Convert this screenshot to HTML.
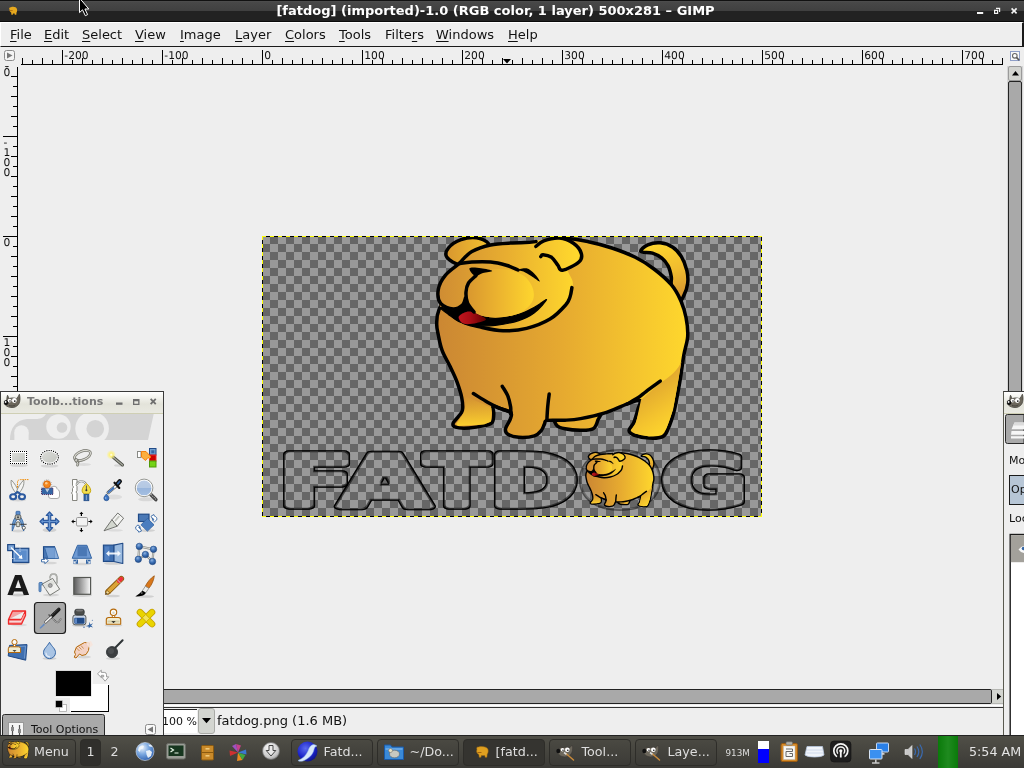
<!DOCTYPE html>
<html lang="en">
<head>
<meta charset="utf-8">
<title>[fatdog] (imported)-1.0 (RGB color, 1 layer) 500x281 – GIMP</title>
<style>
*{box-sizing:border-box;margin:0;padding:0}
html,body{width:1024px;height:768px;overflow:hidden;background:#eeeeee;font-family:"DejaVu Sans","Liberation Sans",sans-serif;font-size:13px;color:#111}
.abs{position:absolute}
#titlebar{position:absolute;left:0;top:0;width:1024px;height:22px;background:linear-gradient(#111 0,#111 1px,#505050 1px,#484848 2px,#404040 10.5px,#222 11px,#222 21px,#0a0a0a 21px,#0a0a0a 22px)}
#titlebar .t{position:absolute;left:0;top:3px;width:991px;text-align:center;color:#fff;font-weight:bold;font-size:13px;line-height:16px;white-space:nowrap}
#menubar{position:absolute;left:0;top:22px;width:1024px;height:25px;background:#eeeeee;border-top:1px solid #fff;border-left:1px solid #fff;border-bottom:1px solid #1a1a1a;border-right:2px solid #1a1a1a}
#menubar span{position:absolute;top:4px;font-size:13px;line-height:16px;white-space:nowrap}
#menubar u{text-decoration:underline;text-underline-offset:2px}
#taskbar{position:absolute;left:0;top:735px;width:1024px;height:33px;background:linear-gradient(#504f47,#3b3a36);border-top:1px solid #222}
#taskbar .lbl{position:absolute;color:#dedede;font-size:12.7px;line-height:16px;top:8px;white-space:nowrap}
.tbtn{position:absolute;top:3px;height:27px;border:1px solid #2e2d29;border-radius:4px;background:linear-gradient(#4a4942,#3c3b37)}
</style>
</head>
<body>
<div id="root" style="position:absolute;left:0;top:0;width:1024px;height:768px;will-change:transform">
<!-- main window title -->
<div id="titlebar">
  <div class="t">[fatdog] (imported)-1.0 (RGB color, 1 layer) 500x281 – GIMP</div>
  <svg class="abs" style="left:0;top:0" width="1024" height="22" viewBox="0 0 1024 22">
    <path d="M9.500 9.500c-0.800-1.200 0-2.600 1.500-2.300 2-0.700 5.500-0.400 6 2 0.300 1.500 0 2.500-0.500 3.300l-0.200 2.300h-1.500l-0.200-1.400h-1.600l-0.200 1.400h-1.400l-0.200-2.200c-1.200-0.600-1.800-1.700-1.700-3.100z" fill="#e6a81e"/><path d="M9.300 10.600h3.400" stroke="#9a5a08" stroke-width="0.700"/>
    <g fill="#f4f4f4"><rect x="977" y="12" width="6.200" height="2"/><path d="M996 7.800h4.200v4.300h-1.200v-3.100h-3zM994 9.800h4.200v4.200h-4.200zM995.200 11v1.800h1.800v-1.800z" fill-rule="evenodd"/><path d="M1011 9l1.200-1.200 1.900 1.900 1.900-1.900 1.200 1.200-1.900 1.900 1.900 1.900-1.200 1.200-1.900-1.900-1.900 1.900-1.200-1.200 1.900-1.900z"/></g>
    <path d="M79.500 -2V12.600l3-2.800 2.800 5.900 2.300-1.100-2.700-5.600h3.900z" fill="#000" stroke="#fff" stroke-width="1" stroke-linejoin="round"/>
  </svg>
</div>
<div id="menubar">
  <span style="left:9px"><u>F</u>ile</span>
  <span style="left:43px"><u>E</u>dit</span>
  <span style="left:81px"><u>S</u>elect</span>
  <span style="left:134px"><u>V</u>iew</span>
  <span style="left:179px"><u>I</u>mage</span>
  <span style="left:234px"><u>L</u>ayer</span>
  <span style="left:284px"><u>C</u>olors</span>
  <span style="left:338px"><u>T</u>ools</span>
  <span style="left:384px">Filte<u>r</u>s</span>
  <span style="left:435px"><u>W</u>indows</span>
  <span style="left:507px"><u>H</u>elp</span>
</div>
<svg class="abs" style="left:0;top:0" width="1024" height="400" viewBox="0 0 1024 400" shape-rendering="crispEdges">
<g stroke="#000" stroke-width="1" fill="none"><path d="M21 64.5H1003"/><path d="M22.5 58V64M32.5 60V64M42.5 58V64M52.5 60V64M62.5 50V64M72.5 60V64M82.5 58V64M92.5 60V64M102.5 58V64M112.5 60V64M122.5 58V64M132.5 60V64M142.5 58V64M152.5 60V64M162.5 50V64M172.5 60V64M182.5 58V64M192.5 60V64M202.5 58V64M212.5 60V64M222.5 58V64M232.5 60V64M242.5 58V64M252.5 60V64M262.5 50V64M272.5 60V64M282.5 58V64M292.5 60V64M302.5 58V64M312.5 60V64M322.5 58V64M332.5 60V64M342.5 58V64M352.5 60V64M362.5 50V64M372.5 60V64M382.5 58V64M392.5 60V64M402.5 58V64M412.5 60V64M422.5 58V64M432.5 60V64M442.5 58V64M452.5 60V64M462.5 50V64M472.5 60V64M482.5 58V64M492.5 60V64M502.5 58V64M512.5 60V64M522.5 58V64M532.5 60V64M542.5 58V64M552.5 60V64M562.5 50V64M572.5 60V64M582.5 58V64M592.5 60V64M602.5 58V64M612.5 60V64M622.5 58V64M632.5 60V64M642.5 58V64M652.5 60V64M662.5 50V64M672.5 60V64M682.5 58V64M692.5 60V64M702.5 58V64M712.5 60V64M722.5 58V64M732.5 60V64M742.5 58V64M752.5 60V64M762.5 50V64M772.5 60V64M782.5 58V64M792.5 60V64M802.5 58V64M812.5 60V64M822.5 58V64M832.5 60V64M842.5 58V64M852.5 60V64M862.5 50V64M872.5 60V64M882.5 58V64M892.5 60V64M902.5 58V64M912.5 60V64M922.5 58V64M932.5 60V64M942.5 58V64M952.5 60V64M962.5 50V64M972.5 60V64M982.5 58V64M992.5 60V64M1002.5 58V64"/><path d="M17.5 67V392"/><path d="M11 76.5H17M13 86.5H17M11 96.5H17M13 106.5H17M11 116.5H17M13 126.5H17M3 136.5H17M13 146.5H17M11 156.5H17M13 166.5H17M11 176.5H17M13 186.5H17M11 196.5H17M13 206.5H17M11 216.5H17M13 226.5H17M3 236.5H17M13 246.5H17M11 256.5H17M13 266.5H17M11 276.5H17M13 286.5H17M11 296.5H17M13 306.5H17M11 316.5H17M13 326.5H17M3 336.5H17M13 346.5H17M11 356.5H17M13 366.5H17M11 376.5H17M13 386.5H17"/></g>
<path d="M503 59h8l-4 4.6z" fill="#000" shape-rendering="auto"/>
<g font-family="DejaVu Sans, sans-serif" font-size="10.7" fill="#111" shape-rendering="auto" text-rendering="geometricPrecision">
<g><text x="64.3" y="58.6">-200</text><text x="164.3" y="58.6">-100</text><text x="264.3" y="58.6">0</text><text x="364.3" y="58.6">100</text><text x="464.3" y="58.6">200</text><text x="564.3" y="58.6">300</text><text x="664.3" y="58.6">400</text><text x="764.3" y="58.6">500</text><text x="864.3" y="58.6">600</text><text x="964.3" y="58.6">700</text></g>
<g clip-path="url(#vclip)"><text x="3.5" y="76.4">0</text><text x="3.5" y="66.6">0</text><text x="3.5" y="146.2">-</text><text x="3.5" y="156.2">1</text><text x="3.5" y="166.2">0</text><text x="3.5" y="176.2">0</text><text x="3.5" y="246.2">0</text><text x="3.5" y="346.2">1</text><text x="3.5" y="356.2">0</text><text x="3.5" y="366.2">0</text></g>
</g>
<defs><clipPath id="vclip"><rect x="0" y="66" width="18" height="330"/></clipPath></defs>
<rect x="4.5" y="50.5" width="10" height="10" rx="2" fill="#f4f4f4" stroke="#8a8a8a" shape-rendering="auto"/>
<path d="M7 52.5l5.5 3-5.5 3z" fill="#777" shape-rendering="auto"/>
</svg>
<svg class="abs" style="left:262px;top:236px" width="500" height="281" viewBox="0 0 500 281">
<defs>
<pattern id="chk" width="16" height="16" patternUnits="userSpaceOnUse"><rect width="16" height="16" fill="#666666"/><rect width="8" height="8" fill="#999999"/><rect x="8" y="8" width="8" height="8" fill="#999999"/></pattern>
<linearGradient id="gold" gradientUnits="userSpaceOnUse" x1="175" y1="0" x2="427" y2="0"><stop offset="0" stop-color="#cb8733"/><stop offset="0.5" stop-color="#e6aa30"/><stop offset="1" stop-color="#ffd82d"/></linearGradient>
<linearGradient id="ghead" gradientUnits="userSpaceOnUse" x1="176" y1="0" x2="314" y2="0"><stop offset="0" stop-color="#cf8c33"/><stop offset="0.5" stop-color="#e8ae30"/><stop offset="1" stop-color="#ffd82d"/></linearGradient>
<linearGradient id="gmuz" gradientUnits="userSpaceOnUse" x1="204" y1="0" x2="270" y2="0"><stop offset="0" stop-color="#d8962f"/><stop offset="0.5" stop-color="#ecb42f"/><stop offset="1" stop-color="#fdd42e"/></linearGradient>
<linearGradient id="gear" gradientUnits="userSpaceOnUse" x1="184" y1="0" x2="228" y2="0"><stop offset="0" stop-color="#d8962f"/><stop offset="1" stop-color="#f3c22f"/></linearGradient>
<linearGradient id="gtail" gradientUnits="userSpaceOnUse" x1="400" y1="8" x2="416" y2="62"><stop offset="0" stop-color="#fdd42e"/><stop offset="0.5" stop-color="#f0bc2f"/><stop offset="1" stop-color="#d4932f"/></linearGradient>
<linearGradient id="gleg" gradientUnits="userSpaceOnUse" x1="0" y1="160" x2="0" y2="190"><stop offset="0" stop-color="#f4c52e" stop-opacity="0"/><stop offset="1" stop-color="#fbd02e"/></linearGradient>
<linearGradient id="gleg2" gradientUnits="userSpaceOnUse" x1="378" y1="150" x2="410" y2="195"><stop offset="0" stop-color="#dda22f"/><stop offset="0.6" stop-color="#f4c42e"/><stop offset="1" stop-color="#ffd82d"/></linearGradient>
<linearGradient id="gtong" gradientUnits="userSpaceOnUse" x1="196" y1="0" x2="224" y2="0"><stop offset="0" stop-color="#c2161f"/><stop offset="0.45" stop-color="#a80d15"/><stop offset="1" stop-color="#5e0000"/></linearGradient>
</defs>
<rect x="0" y="0" width="500" height="281" fill="url(#chk)" shape-rendering="crispEdges"/>
<g font-family="DejaVu Sans, Liberation Sans, sans-serif" font-weight="bold" font-size="70.8" stroke-linejoin="round" stroke="#000" stroke-width="7.4" fill="#000">
<filter id="ring" filterUnits="userSpaceOnUse" x="0" y="200" width="500" height="81"><feMorphology in="SourceAlpha" operator="erode" radius="1" result="e1"/><feMorphology in="SourceAlpha" operator="erode" radius="2" result="e2"/><feComposite in="SourceAlpha" in2="e1" operator="out" result="r1"/><feComposite in="SourceAlpha" in2="e2" operator="out" result="r2"/><feComponentTransfer in="r2" result="r2h"><feFuncA type="linear" slope="0.55"/></feComponentTransfer><feMerge><feMergeNode in="r2h"/><feMergeNode in="r1"/></feMerge></filter>
<g filter="url(#ring)"><text transform="translate(16.67 270.3) scale(1.547 1)">F</text></g>
<g filter="url(#ring)"><text transform="translate(77.18 270.3) scale(1.665 1)">A</text></g>
<g filter="url(#ring)"><text transform="translate(162.49 270.3) scale(1.337 1)">T</text></g>
<g filter="url(#ring)"><text transform="translate(227.80 270.3) scale(1.501 1)">D</text></g>
<g filter="url(#ring)" opacity="0.5"><text transform="translate(317.24 270.3) scale(1.355 1)">O</text></g>
<g filter="url(#ring)"><text transform="translate(399.26 270.3) scale(1.480 1)">G</text></g>
</g>
<g id="dog">
<path d="M378.8 15.4C378.0 14.0 382.6 10.2 385.8 8.8C389.1 7.4 394.1 6.4 398.3 6.8C402.5 7.2 407.3 8.9 410.8 11.2C414.3 13.5 417.0 16.7 419.4 20.6C421.8 24.5 423.8 30.2 424.9 34.6C425.9 39.0 426.2 42.9 425.7 47.1C425.2 51.3 423.4 56.5 421.8 59.6C420.2 62.8 418.1 67.6 416.0 66.0C413.9 64.4 410.6 54.2 409.5 50.0C408.4 45.8 409.9 44.2 409.3 40.9C408.7 37.5 407.7 33.0 406.1 29.9C404.5 26.8 402.5 24.2 399.9 22.1C397.3 20.0 394.0 18.2 390.5 17.1C387.0 16.0 379.6 16.8 378.8 15.4Z" fill="url(#gtail)" stroke="#000" stroke-width="3.5" stroke-linejoin="round" stroke-linecap="round"/>
<path d="M296.0 180.0C289.1 182.1 293.1 186.7 294.3 188.8C295.5 190.9 298.9 191.9 303.0 192.8C307.1 193.7 313.9 194.3 318.6 194.3C323.3 194.3 328.2 194.5 331.1 192.8C334.0 191.1 335.0 187.0 335.8 184.2C336.6 181.4 342.6 176.7 336.0 176.0C329.4 175.3 302.9 177.9 296.0 180.0Z" fill="url(#gold)" stroke="#000" stroke-width="3.5" stroke-linejoin="round" stroke-linecap="round"/>
<path d="M303.0 2.6C309.1 2.1 318.6 4.1 326.4 5.7C334.2 7.3 342.1 9.4 349.9 12.0C357.7 14.6 366.3 17.8 373.3 21.3C380.3 24.8 386.0 28.4 392.0 33.0C398.0 37.6 404.9 43.5 409.3 48.7C413.7 53.9 416.2 58.8 418.6 64.3C421.1 69.8 422.8 75.5 424.0 81.5C425.2 87.5 426.1 94.0 425.7 100.3C425.3 106.6 423.1 111.7 421.8 119.3C420.5 126.9 419.4 136.8 417.8 145.9C416.2 155.0 414.3 166.2 412.4 174.0C410.4 181.8 408.1 188.4 406.1 192.8C404.2 197.2 403.8 199.1 400.7 200.6C397.6 202.1 392.2 202.4 387.4 202.1C382.6 201.8 375.2 200.3 371.8 199.0C368.4 197.7 367.0 196.4 367.0 194.3C367.0 192.2 370.3 190.1 371.8 186.5C373.3 182.9 375.0 176.7 376.0 173.0C377.0 169.3 379.8 165.4 378.0 164.5C376.2 163.6 371.5 165.7 365.5 167.8C359.5 169.9 349.8 174.6 342.0 177.1C334.2 179.6 325.1 181.4 318.6 182.6C312.1 183.8 308.6 183.9 303.0 184.2C297.4 184.5 288.6 183.8 285.2 184.4C281.8 185.0 283.5 186.3 282.5 188.0C281.5 189.7 281.1 192.3 279.4 194.3C277.7 196.3 276.2 198.6 272.4 199.8C268.6 201.0 261.2 201.6 256.8 201.3C252.4 201.0 248.0 199.6 245.8 198.2C243.6 196.8 243.1 195.3 243.5 192.8C243.9 190.3 247.3 186.1 248.2 183.4C249.1 180.7 250.5 178.4 248.8 176.6C247.1 174.8 241.0 173.4 238.0 172.4C235.0 171.4 232.0 169.6 231.0 170.4C230.0 171.2 231.9 174.4 231.8 177.1C231.7 179.8 231.8 184.4 230.2 186.5C228.6 188.6 226.3 188.7 222.4 189.6C218.5 190.5 211.6 191.7 206.8 192.0C202.0 192.3 196.1 192.0 193.5 191.2C190.9 190.4 190.6 189.1 191.1 187.3C191.6 185.5 195.0 182.5 196.6 180.3C198.2 178.1 200.0 177.1 200.5 174.0C201.0 170.9 200.6 166.2 199.7 161.5C198.8 156.8 196.9 151.1 195.0 145.9C193.1 140.7 190.5 135.5 188.0 130.3C185.5 125.1 182.1 119.8 180.2 114.6C178.2 109.4 177.2 103.5 176.3 99.0C175.4 94.5 174.6 92.0 174.7 87.8C174.8 83.6 174.4 80.0 177.0 73.7C179.6 67.4 183.7 58.0 190.0 50.0C196.3 42.0 204.2 31.8 215.0 26.0C225.8 20.2 242.5 17.8 255.0 15.0C267.5 12.2 282.0 11.1 290.0 9.0C298.0 6.9 296.9 3.1 303.0 2.6Z" fill="url(#gold)" stroke="#000" stroke-width="3.5" stroke-linejoin="round" stroke-linecap="round"/>
<path d="M203 160C204 170 203 176 199 181L194 188L196 190L222 188.5L229 185.5L230 172Z" fill="url(#gleg)"/>
<path d="M397 148L379 164L374 187L369.5 194L373 197.5L387 200.5L399.5 199L404.500 192L411 174L416 146L419.500 125C417 133 408 141 397 148Z" fill="url(#gleg2)"/>
<path d="M211.4 157.6C213.8 159.0 221.1 163.7 225.5 166.2C229.9 168.7 234.1 170.7 238.0 172.4C241.9 174.1 247.1 175.7 248.9 176.3" fill="none" stroke="#000" stroke-width="3.5" stroke-linejoin="round" stroke-linecap="round"/>
<path d="M240.3 150.3C241.2 151.9 244.4 156.5 245.8 159.9C247.2 163.3 248.1 167.9 248.6 170.9C249.1 173.9 248.6 176.8 248.6 178.0" fill="none" stroke="#000" stroke-width="3.5" stroke-linejoin="round" stroke-linecap="round"/>
<path d="M287.2 158.1C286.9 160.2 286.1 166.6 285.7 170.9C285.3 175.2 285.0 182.0 284.9 184.2" fill="none" stroke="#000" stroke-width="3.5" stroke-linejoin="round" stroke-linecap="round"/>
<path d="M398.3 145.1C396.0 146.8 388.0 152.5 384.3 155.3C380.6 158.1 379.1 159.7 376.0 161.8C372.9 163.9 367.2 166.8 365.5 167.8" fill="none" stroke="#000" stroke-width="3.5" stroke-linejoin="round" stroke-linecap="round"/>
<path d="M198.0 28.5C193.8 28.4 186.8 24.1 184.9 21.3C183.0 18.6 184.1 14.9 186.4 12.0C188.8 9.1 194.3 5.4 199.0 3.7C203.7 2.0 210.0 1.2 214.6 1.8C219.2 2.4 225.1 5.3 226.3 7.3C227.5 9.3 224.7 11.6 222.0 14.0C219.3 16.4 214.0 19.6 210.0 22.0C206.0 24.4 202.2 28.6 198.0 28.5Z" fill="url(#gear)" stroke="#000" stroke-width="3.5" stroke-linejoin="round" stroke-linecap="round"/>
<path d="M196.6 26.5C201.0 22.5 204.6 18.1 209.9 15.1C215.2 12.2 221.8 10.2 228.6 8.8C235.4 7.4 244.8 7.2 250.5 6.8C256.2 6.4 258.6 6.9 263.0 6.5C267.4 6.1 271.3 4.9 277.0 4.2C282.7 3.5 291.7 1.6 297.4 2.1C303.1 2.6 307.8 4.8 311.4 7.3C315.0 9.8 318.4 14.3 319.3 17.4C320.2 20.5 319.1 23.4 316.9 26.0C314.7 28.6 307.1 29.8 306.0 33.0C304.9 36.2 309.9 41.7 310.5 45.0C311.1 48.3 311.0 48.6 309.9 52.6C308.8 56.6 307.2 63.9 303.6 69.0C300.0 74.1 294.5 79.2 288.0 83.1C281.5 87.0 272.4 90.5 264.6 92.4C256.8 94.4 248.9 95.0 241.1 94.8C233.3 94.5 224.2 92.3 217.7 90.9C211.2 89.5 207.2 88.3 202.0 86.2C196.8 84.1 190.3 80.8 186.4 78.4C182.5 76.0 180.3 76.2 178.6 72.0C176.9 67.8 175.5 58.9 176.3 53.4C177.1 47.9 179.9 43.8 183.3 39.3C186.7 34.8 192.2 30.5 196.6 26.5Z" fill="url(#ghead)"/>
<path d="M197.5 27.0C199.6 25.1 204.7 18.6 209.9 15.6C215.1 12.6 221.8 10.4 228.6 9.0C235.4 7.5 244.8 7.3 250.5 6.9C256.2 6.5 259.1 6.8 263.0 6.6C266.9 6.4 272.2 5.8 274.0 5.6" fill="none" stroke="#000" stroke-width="3.5" stroke-linejoin="round" stroke-linecap="round"/>
<path d="M273.9 10.4C275.2 9.5 277.9 6.3 281.8 4.9C285.7 3.5 292.5 1.7 297.4 2.1C302.3 2.5 307.8 4.8 311.4 7.3C315.0 9.8 318.4 14.3 319.3 17.4C320.2 20.5 320.0 23.2 316.9 26.0C313.8 28.8 304.0 33.8 300.5 34.3C297.0 34.8 297.6 31.4 295.8 29.2C294.0 27.0 292.1 23.1 289.6 21.3C287.1 19.6 282.8 18.8 281.0 18.7C279.2 18.6 279.2 20.3 278.8 20.6" fill="none" stroke="#000" stroke-width="3.5" stroke-linejoin="round" stroke-linecap="round"/>
<path d="M197.5 27.4C195.1 29.4 186.8 35.0 183.3 39.3C179.8 43.6 177.1 48.7 176.3 53.4C175.5 58.1 176.1 64.2 178.6 67.4C181.1 70.7 187.4 72.6 191.1 72.9C194.8 73.2 198.4 70.8 200.5 69.0C202.6 67.2 203.0 63.2 203.5 62.0" fill="url(#ghead)" stroke="#000" stroke-width="3.5" stroke-linejoin="round" stroke-linecap="round"/>
<path d="M197.5 27.6C199.6 27.3 204.7 26.3 209.9 26.0C215.1 25.7 222.9 25.5 228.6 26.0C234.3 26.5 239.7 27.9 244.3 29.2C248.9 30.5 254.1 33.2 256.0 34.0" fill="none" stroke="#000" stroke-width="3.5" stroke-linejoin="round" stroke-linecap="round"/>
<path d="M309.9 51.6C309.6 53.2 309.1 58.1 308.0 61.0C306.9 63.9 306.9 65.3 303.6 69.0C300.3 72.7 294.5 79.2 288.0 83.1C281.5 87.0 272.4 90.5 264.6 92.4C256.8 94.4 248.9 95.0 241.1 94.8C233.3 94.5 224.2 92.3 217.7 90.9C211.2 89.5 204.6 87.3 202.0 86.6" fill="none" stroke="#000" stroke-width="3.5" stroke-linejoin="round" stroke-linecap="round"/>
<path d="M203.5 66.5C205.8 67.8 209.6 75.8 214.6 78.4C219.6 81.0 226.3 82.3 233.3 82.3C240.3 82.3 250.3 80.2 256.8 78.4C263.3 76.6 267.8 73.8 272.4 71.3C277.0 68.8 284.6 62.7 284.6 63.6C284.6 64.5 277.0 73.3 272.4 76.8C267.8 80.3 263.3 82.5 256.8 84.6C250.3 86.7 241.1 88.5 233.3 89.3C225.5 90.1 216.0 89.9 209.9 89.3C203.8 88.7 200.5 87.2 196.6 85.4C192.7 83.6 189.5 80.7 186.4 78.4C183.3 76.1 177.4 72.1 178.2 71.4C179.0 70.7 187.4 74.3 191.1 74.2C194.8 74.1 198.5 71.9 200.6 70.6C202.7 69.3 201.2 65.2 203.5 66.5Z" fill="#000" stroke="#000" stroke-width="1.2" stroke-linejoin="round"/>
<path d="M196.6 81.5C196.6 79.7 199.8 77.7 202.0 76.8C204.2 75.9 206.2 75.0 209.9 76.0C213.6 77.0 223.1 81.3 223.9 83.1C224.7 84.9 218.2 86.2 214.6 87.0C210.9 87.8 205.0 88.7 202.0 87.8C199.0 86.9 196.6 83.3 196.6 81.5Z" fill="url(#gtong)"/>
<path d="M213.0 40.0C216.4 36.8 219.7 35.1 225.0 34.0C230.3 32.9 238.8 32.5 245.0 33.5C251.2 34.5 257.7 36.8 262.0 40.0C266.3 43.2 269.7 48.7 271.0 53.0C272.3 57.3 272.4 61.9 270.0 66.0C267.6 70.1 262.9 74.9 256.8 77.5C250.7 80.1 240.3 81.5 233.3 81.5C226.3 81.5 219.3 80.1 214.6 77.5C209.9 74.9 206.7 70.0 205.0 66.0C203.3 62.0 203.1 57.7 204.4 53.4C205.7 49.1 209.6 43.2 213.0 40.0Z" fill="url(#gmuz)"/>
<path d="M214.0 39.5C212.8 40.8 208.2 44.2 206.5 47.0C204.8 49.8 204.2 52.7 204.0 56.0C203.8 59.3 204.2 63.7 205.5 67.0C206.8 70.3 210.9 74.5 212.0 76.0" fill="none" stroke="#000" stroke-width="3.5" stroke-linejoin="round" stroke-linecap="round"/>
<path d="M207.5 32.3C208.5 31.0 215.2 31.8 219.0 32.2C222.8 32.6 229.9 34.1 230.2 34.9C230.5 35.7 223.9 36.2 221.0 37.0C218.1 37.8 215.2 40.7 213.0 39.9C210.8 39.1 206.5 33.6 207.5 32.3Z" fill="#000"/>
<path d="M255.2 33.8C255.7 33.2 261.7 31.6 264.6 32.3C267.5 33.0 270.2 35.6 272.4 37.8C274.6 40.0 278.3 45.2 277.8 45.6C277.3 46.0 271.9 41.8 269.2 40.1C266.5 38.4 263.7 36.7 261.4 35.6C259.1 34.5 254.7 34.3 255.2 33.8Z" fill="#000"/>
</g>
<g transform="translate(276.500 216) scale(0.271)"><g id="dogs">
<path d="M378.8 15.4C378.0 14.0 382.6 10.2 385.8 8.8C389.1 7.4 394.1 6.4 398.3 6.8C402.5 7.2 407.3 8.9 410.8 11.2C414.3 13.5 417.0 16.7 419.4 20.6C421.8 24.5 423.8 30.2 424.9 34.6C425.9 39.0 426.2 42.9 425.7 47.1C425.2 51.3 423.4 56.5 421.8 59.6C420.2 62.8 418.1 67.6 416.0 66.0C413.9 64.4 410.6 54.2 409.5 50.0C408.4 45.8 409.9 44.2 409.3 40.9C408.7 37.5 407.7 33.0 406.1 29.9C404.5 26.8 402.5 24.2 399.9 22.1C397.3 20.0 394.0 18.2 390.5 17.1C387.0 16.0 379.6 16.8 378.8 15.4Z" fill="url(#gtail)" stroke="#000" stroke-width="5.2" stroke-linejoin="round" stroke-linecap="round"/>
<path d="M296.0 180.0C289.1 182.1 293.1 186.7 294.3 188.8C295.5 190.9 298.9 191.9 303.0 192.8C307.1 193.7 313.9 194.3 318.6 194.3C323.3 194.3 328.2 194.5 331.1 192.8C334.0 191.1 335.0 187.0 335.8 184.2C336.6 181.4 342.6 176.7 336.0 176.0C329.4 175.3 302.9 177.9 296.0 180.0Z" fill="url(#gold)" stroke="#000" stroke-width="5.2" stroke-linejoin="round" stroke-linecap="round"/>
<path d="M303.0 2.6C309.1 2.1 318.6 4.1 326.4 5.7C334.2 7.3 342.1 9.4 349.9 12.0C357.7 14.6 366.3 17.8 373.3 21.3C380.3 24.8 386.0 28.4 392.0 33.0C398.0 37.6 404.9 43.5 409.3 48.7C413.7 53.9 416.2 58.8 418.6 64.3C421.1 69.8 422.8 75.5 424.0 81.5C425.2 87.5 426.1 94.0 425.7 100.3C425.3 106.6 423.1 111.7 421.8 119.3C420.5 126.9 419.4 136.8 417.8 145.9C416.2 155.0 414.3 166.2 412.4 174.0C410.4 181.8 408.1 188.4 406.1 192.8C404.2 197.2 403.8 199.1 400.7 200.6C397.6 202.1 392.2 202.4 387.4 202.1C382.6 201.8 375.2 200.3 371.8 199.0C368.4 197.7 367.0 196.4 367.0 194.3C367.0 192.2 370.3 190.1 371.8 186.5C373.3 182.9 375.0 176.7 376.0 173.0C377.0 169.3 379.8 165.4 378.0 164.5C376.2 163.6 371.5 165.7 365.5 167.8C359.5 169.9 349.8 174.6 342.0 177.1C334.2 179.6 325.1 181.4 318.6 182.6C312.1 183.8 308.6 183.9 303.0 184.2C297.4 184.5 288.6 183.8 285.2 184.4C281.8 185.0 283.5 186.3 282.5 188.0C281.5 189.7 281.1 192.3 279.4 194.3C277.7 196.3 276.2 198.6 272.4 199.8C268.6 201.0 261.2 201.6 256.8 201.3C252.4 201.0 248.0 199.6 245.8 198.2C243.6 196.8 243.1 195.3 243.5 192.8C243.9 190.3 247.3 186.1 248.2 183.4C249.1 180.7 250.5 178.4 248.8 176.6C247.1 174.8 241.0 173.4 238.0 172.4C235.0 171.4 232.0 169.6 231.0 170.4C230.0 171.2 231.9 174.4 231.8 177.1C231.7 179.8 231.8 184.4 230.2 186.5C228.6 188.6 226.3 188.7 222.4 189.6C218.5 190.5 211.6 191.7 206.8 192.0C202.0 192.3 196.1 192.0 193.5 191.2C190.9 190.4 190.6 189.1 191.1 187.3C191.6 185.5 195.0 182.5 196.6 180.3C198.2 178.1 200.0 177.1 200.5 174.0C201.0 170.9 200.6 166.2 199.7 161.5C198.8 156.8 196.9 151.1 195.0 145.9C193.1 140.7 190.5 135.5 188.0 130.3C185.5 125.1 182.1 119.8 180.2 114.6C178.2 109.4 177.2 103.5 176.3 99.0C175.4 94.5 174.6 92.0 174.7 87.8C174.8 83.6 174.4 80.0 177.0 73.7C179.6 67.4 183.7 58.0 190.0 50.0C196.3 42.0 204.2 31.8 215.0 26.0C225.8 20.2 242.5 17.8 255.0 15.0C267.5 12.2 282.0 11.1 290.0 9.0C298.0 6.9 296.9 3.1 303.0 2.6Z" fill="url(#gold)" stroke="#000" stroke-width="5.2" stroke-linejoin="round" stroke-linecap="round"/>
<path d="M203 160C204 170 203 176 199 181L194 188L196 190L222 188.5L229 185.5L230 172Z" fill="url(#gleg)"/>
<path d="M397 148L379 164L374 187L369.5 194L373 197.5L387 200.5L399.5 199L404.500 192L411 174L416 146L419.500 125C417 133 408 141 397 148Z" fill="url(#gleg2)"/>
<path d="M211.4 157.6C213.8 159.0 221.1 163.7 225.5 166.2C229.9 168.7 234.1 170.7 238.0 172.4C241.9 174.1 247.1 175.7 248.9 176.3" fill="none" stroke="#000" stroke-width="5.2" stroke-linejoin="round" stroke-linecap="round"/>
<path d="M240.3 150.3C241.2 151.9 244.4 156.5 245.8 159.9C247.2 163.3 248.1 167.9 248.6 170.9C249.1 173.9 248.6 176.8 248.6 178.0" fill="none" stroke="#000" stroke-width="5.2" stroke-linejoin="round" stroke-linecap="round"/>
<path d="M287.2 158.1C286.9 160.2 286.1 166.6 285.7 170.9C285.3 175.2 285.0 182.0 284.9 184.2" fill="none" stroke="#000" stroke-width="5.2" stroke-linejoin="round" stroke-linecap="round"/>
<path d="M398.3 145.1C396.0 146.8 388.0 152.5 384.3 155.3C380.6 158.1 379.1 159.7 376.0 161.8C372.9 163.9 367.2 166.8 365.5 167.8" fill="none" stroke="#000" stroke-width="5.2" stroke-linejoin="round" stroke-linecap="round"/>
<path d="M198.0 28.5C193.8 28.4 186.8 24.1 184.9 21.3C183.0 18.6 184.1 14.9 186.4 12.0C188.8 9.1 194.3 5.4 199.0 3.7C203.7 2.0 210.0 1.2 214.6 1.8C219.2 2.4 225.1 5.3 226.3 7.3C227.5 9.3 224.7 11.6 222.0 14.0C219.3 16.4 214.0 19.6 210.0 22.0C206.0 24.4 202.2 28.6 198.0 28.5Z" fill="url(#gear)" stroke="#000" stroke-width="5.2" stroke-linejoin="round" stroke-linecap="round"/>
<path d="M196.6 26.5C201.0 22.5 204.6 18.1 209.9 15.1C215.2 12.2 221.8 10.2 228.6 8.8C235.4 7.4 244.8 7.2 250.5 6.8C256.2 6.4 258.6 6.9 263.0 6.5C267.4 6.1 271.3 4.9 277.0 4.2C282.7 3.5 291.7 1.6 297.4 2.1C303.1 2.6 307.8 4.8 311.4 7.3C315.0 9.8 318.4 14.3 319.3 17.4C320.2 20.5 319.1 23.4 316.9 26.0C314.7 28.6 307.1 29.8 306.0 33.0C304.9 36.2 309.9 41.7 310.5 45.0C311.1 48.3 311.0 48.6 309.9 52.6C308.8 56.6 307.2 63.9 303.6 69.0C300.0 74.1 294.5 79.2 288.0 83.1C281.5 87.0 272.4 90.5 264.6 92.4C256.8 94.4 248.9 95.0 241.1 94.8C233.3 94.5 224.2 92.3 217.7 90.9C211.2 89.5 207.2 88.3 202.0 86.2C196.8 84.1 190.3 80.8 186.4 78.4C182.5 76.0 180.3 76.2 178.6 72.0C176.9 67.8 175.5 58.9 176.3 53.4C177.1 47.9 179.9 43.8 183.3 39.3C186.7 34.8 192.2 30.5 196.6 26.5Z" fill="url(#ghead)"/>
<path d="M197.5 27.0C199.6 25.1 204.7 18.6 209.9 15.6C215.1 12.6 221.8 10.4 228.6 9.0C235.4 7.5 244.8 7.3 250.5 6.9C256.2 6.5 259.1 6.8 263.0 6.6C266.9 6.4 272.2 5.8 274.0 5.6" fill="none" stroke="#000" stroke-width="5.2" stroke-linejoin="round" stroke-linecap="round"/>
<path d="M273.9 10.4C275.2 9.5 277.9 6.3 281.8 4.9C285.7 3.5 292.5 1.7 297.4 2.1C302.3 2.5 307.8 4.8 311.4 7.3C315.0 9.8 318.4 14.3 319.3 17.4C320.2 20.5 320.0 23.2 316.9 26.0C313.8 28.8 304.0 33.8 300.5 34.3C297.0 34.8 297.6 31.4 295.8 29.2C294.0 27.0 292.1 23.1 289.6 21.3C287.1 19.6 282.8 18.8 281.0 18.7C279.2 18.6 279.2 20.3 278.8 20.6" fill="none" stroke="#000" stroke-width="5.2" stroke-linejoin="round" stroke-linecap="round"/>
<path d="M197.5 27.4C195.1 29.4 186.8 35.0 183.3 39.3C179.8 43.6 177.1 48.7 176.3 53.4C175.5 58.1 176.1 64.2 178.6 67.4C181.1 70.7 187.4 72.6 191.1 72.9C194.8 73.2 198.4 70.8 200.5 69.0C202.6 67.2 203.0 63.2 203.5 62.0" fill="url(#ghead)" stroke="#000" stroke-width="5.2" stroke-linejoin="round" stroke-linecap="round"/>
<path d="M197.5 27.6C199.6 27.3 204.7 26.3 209.9 26.0C215.1 25.7 222.9 25.5 228.6 26.0C234.3 26.5 239.7 27.9 244.3 29.2C248.9 30.5 254.1 33.2 256.0 34.0" fill="none" stroke="#000" stroke-width="5.2" stroke-linejoin="round" stroke-linecap="round"/>
<path d="M309.9 51.6C309.6 53.2 309.1 58.1 308.0 61.0C306.9 63.9 306.9 65.3 303.6 69.0C300.3 72.7 294.5 79.2 288.0 83.1C281.5 87.0 272.4 90.5 264.6 92.4C256.8 94.4 248.9 95.0 241.1 94.8C233.3 94.5 224.2 92.3 217.7 90.9C211.2 89.5 204.6 87.3 202.0 86.6" fill="none" stroke="#000" stroke-width="5.2" stroke-linejoin="round" stroke-linecap="round"/>
<path d="M203.5 66.5C205.8 67.8 209.6 75.8 214.6 78.4C219.6 81.0 226.3 82.3 233.3 82.3C240.3 82.3 250.3 80.2 256.8 78.4C263.3 76.6 267.8 73.8 272.4 71.3C277.0 68.8 284.6 62.7 284.6 63.6C284.6 64.5 277.0 73.3 272.4 76.8C267.8 80.3 263.3 82.5 256.8 84.6C250.3 86.7 241.1 88.5 233.3 89.3C225.5 90.1 216.0 89.9 209.9 89.3C203.8 88.7 200.5 87.2 196.6 85.4C192.7 83.6 189.5 80.7 186.4 78.4C183.3 76.1 177.4 72.1 178.2 71.4C179.0 70.7 187.4 74.3 191.1 74.2C194.8 74.1 198.5 71.9 200.6 70.6C202.7 69.3 201.2 65.2 203.5 66.5Z" fill="#000" stroke="#000" stroke-width="1.2" stroke-linejoin="round"/>
<path d="M196.6 81.5C196.6 79.7 199.8 77.7 202.0 76.8C204.2 75.9 206.2 75.0 209.9 76.0C213.6 77.0 223.1 81.3 223.9 83.1C224.7 84.9 218.2 86.2 214.6 87.0C210.9 87.8 205.0 88.7 202.0 87.8C199.0 86.9 196.6 83.3 196.6 81.5Z" fill="url(#gtong)"/>
<path d="M213.0 40.0C216.4 36.8 219.7 35.1 225.0 34.0C230.3 32.9 238.8 32.5 245.0 33.5C251.2 34.5 257.7 36.8 262.0 40.0C266.3 43.2 269.7 48.7 271.0 53.0C272.3 57.3 272.4 61.9 270.0 66.0C267.6 70.1 262.9 74.9 256.8 77.5C250.7 80.1 240.3 81.5 233.3 81.5C226.3 81.5 219.3 80.1 214.6 77.5C209.9 74.9 206.7 70.0 205.0 66.0C203.3 62.0 203.1 57.7 204.4 53.4C205.7 49.1 209.6 43.2 213.0 40.0Z" fill="url(#gmuz)"/>
<path d="M214.0 39.5C212.8 40.8 208.2 44.2 206.5 47.0C204.8 49.8 204.2 52.7 204.0 56.0C203.8 59.3 204.2 63.7 205.5 67.0C206.8 70.3 210.9 74.5 212.0 76.0" fill="none" stroke="#000" stroke-width="5.2" stroke-linejoin="round" stroke-linecap="round"/>
<path d="M207.5 32.3C208.5 31.0 215.2 31.8 219.0 32.2C222.8 32.6 229.9 34.1 230.2 34.9C230.5 35.7 223.9 36.2 221.0 37.0C218.1 37.8 215.2 40.7 213.0 39.9C210.8 39.1 206.5 33.6 207.5 32.3Z" fill="#000"/>
<path d="M255.2 33.8C255.7 33.2 261.7 31.6 264.6 32.3C267.5 33.0 270.2 35.6 272.4 37.8C274.6 40.0 278.3 45.2 277.8 45.6C277.3 46.0 271.9 41.8 269.2 40.1C266.5 38.4 263.7 36.7 261.4 35.6C259.1 34.5 254.7 34.3 255.2 33.8Z" fill="#000"/>
</g></g>
<rect x="0.5" y="0.5" width="499" height="280" fill="none" stroke="#000" stroke-width="1" shape-rendering="crispEdges"/>
<g stroke="#ffff00" stroke-width="1" stroke-dasharray="4 4" shape-rendering="crispEdges"><path d="M0 0.500H500"/><path d="M0 280.500H500"/><path d="M0.500 0V281"/><path d="M499.500 0V281" stroke-dashoffset="3"/></g>
</svg>

<!-- vertical scrollbar -->
<div class="abs" style="left:1007px;top:66px;width:16px;height:325px;background:#d6d6d6"></div>
<div class="abs" style="left:1008px;top:66px;width:14px;height:15px;background:#d3d4d0;border:1px solid #9a9a9a;border-radius:2px"></div>
<svg class="abs" style="left:1008px;top:66px" width="14" height="15"><path d="M4 9.5h7L7.500 5z" fill="#000"/></svg>
<div class="abs" style="left:1008px;top:81px;width:14px;height:311px;background:#a9a9a9;border:1px solid #222;border-radius:2px 2px 0 0"></div>
<!-- zoom corner icon -->
<svg class="abs" style="left:1008px;top:49px" width="14" height="14" viewBox="0 0 14 14"><rect x="2.500" y="2.500" width="9" height="9" fill="#f8f8f8" stroke="#2a4a9a" stroke-width="1" stroke-dasharray="1 1"/><circle cx="6.8" cy="6.800" r="2.300" fill="#fff" stroke="#666" stroke-width="1.100"/><path d="M8.600 8.600l2.600 2.600" stroke="#555" stroke-width="1.600"/></svg>
<!-- horizontal scrollbar -->
<div class="abs" style="left:164px;top:689px;width:828px;height:15px;background:#a9a9a9;border:1px solid #222;border-left:0;border-radius:0 2px 2px 0"></div>
<div class="abs" style="left:992px;top:689px;width:11px;height:15px;background:#d3d5d0;border-top:1px solid #b5b6b2;border-bottom:1px solid #b5b6b2"></div>
<svg class="abs" style="left:992px;top:689px" width="12" height="15"><path d="M5 4v7l4.200-3.500z" fill="#000"/></svg>
<div class="abs" style="left:164px;top:705px;width:840px;height:1px;background:#fff"></div>
<div class="abs" style="left:164px;top:707px;width:840px;height:1px;background:#333"></div>
<!-- status bar -->
<div class="abs" style="left:164px;top:708px;width:840px;height:27px;background:#eeeeee"></div>
<div class="abs" style="left:164px;top:709px;width:33px;height:24px;background:#fff;border-top:1px solid #222;overflow:hidden"><div class="abs" style="left:-2px;top:4px;font-size:11px;line-height:16px;white-space:nowrap">100 %</div></div>
<div class="abs" style="left:198px;top:708px;width:17px;height:26px;background:#d3d5d0;border:1px solid #a9aaa6;border-radius:3px"></div>
<svg class="abs" style="left:198px;top:708px" width="17" height="26"><path d="M4 10h9l-4.500 5.200z" fill="#000"/></svg>
<div class="abs" style="left:217px;top:713px;font-size:13px;line-height:16px;white-space:nowrap">fatdog.png (1.6 MB)</div>

<!-- toolbox window -->
<div class="abs" style="left:0;top:391px;width:164px;height:344px;background:#eeeeee;border:1px solid #3a3a3a;border-bottom:0"></div>
<div class="abs" style="left:1px;top:392px;width:162px;height:22px;background:linear-gradient(#ffffff 0,#f4f4ef 5px,#e3e3da 12px,#e9e9e1 21px);border-bottom:1px solid #cfcfb4"></div>
<div class="abs" style="left:27px;top:394px;font-size:11px;line-height:16px;font-weight:bold;color:#777;white-space:nowrap">Toolb...tions</div>
<svg class="abs" style="left:0;top:391px" width="164" height="344" viewBox="0 391 164 344">
<defs>
<linearGradient id="tbGray" x1="0" y1="0" x2="1" y2="1"><stop offset="0" stop-color="#dcddd9"/><stop offset="1" stop-color="#c2c4bf"/></linearGradient>
<radialGradient id="tbGlow"><stop offset="0" stop-color="#fff"/><stop offset="0.35" stop-color="#fff27a"/><stop offset="1" stop-color="#fff27a" stop-opacity="0"/></radialGradient>
<linearGradient id="tbBlue" x1="0" y1="0" x2="1" y2="1"><stop offset="0" stop-color="#6a93c8"/><stop offset="1" stop-color="#3465a4"/></linearGradient>
<linearGradient id="tbBlend" x1="0" y1="0" x2="1" y2="0"><stop offset="0" stop-color="#5a5a5a"/><stop offset="1" stop-color="#fafafa"/></linearGradient>
<linearGradient id="tbGlass" x1="0" y1="0" x2="0" y2="1"><stop offset="0" stop-color="#bccde6"/><stop offset="0.48" stop-color="#b4c8e3"/><stop offset="0.52" stop-color="#98b5dc"/><stop offset="1" stop-color="#a6c0e2"/></linearGradient>
<radialGradient id="tbBall" cx="0.4" cy="0.3" r="0.7"><stop offset="0" stop-color="#8fb3e0"/><stop offset="0.5" stop-color="#3f73b8"/><stop offset="1" stop-color="#204a87"/></radialGradient>
<linearGradient id="tbShadow" x1="0" y1="0" x2="0" y2="1"><stop offset="0" stop-color="#000" stop-opacity="0.22"/><stop offset="1" stop-color="#000" stop-opacity="0"/></linearGradient>
</defs>
<!-- wm buttons -->
<g fill="#6e6e6e"><rect x="116" y="402.500" width="6.500" height="2.300"/><path d="M133 399h6.500v6h-6.500zM134.300 401.300v2.400h3.900v-2.400z" fill-rule="evenodd"/><path d="M150 399.600l1.300-1.300 1.900 1.900 1.900-1.900 1.300 1.300-1.900 1.900 1.900 1.900-1.300 1.300-1.900-1.900-1.900 1.900-1.300-1.300 1.900-1.900z"/></g>
<g id="wilber"><path d="M7.500 395.200c0.800 1.500 1.200 2.600 1.800 3.400 2.400-1 5.200-0.900 7.200 0.100 1.200-1.200 2.100-2.800 2.900-4.500 0.900 3 0.900 6.400-0.300 9.200-1.500 3-5 4.600-8.500 4.100-3.200-0.500-5.300-2-6.300-3.900l2.500-4.300c0-1.500 0.300-2.900 0.700-4.100z" fill="#6c675c" stroke="#3e3c37" stroke-width="0.700" stroke-linejoin="round"/>
<path d="M9 405.300c2 1 4.500 0.900 6.500-0.500" fill="none" stroke="#3e3c37" stroke-width="0.800"/>
<ellipse cx="6.100" cy="402.500" rx="2.200" ry="2.500" transform="rotate(-25 6.100 402.500)" fill="#111"/><ellipse cx="5.600" cy="401.900" rx="0.900" ry="1.100" fill="#e8e8e8"/>
<circle cx="9.600" cy="400.600" r="1.900" fill="#fff"/><circle cx="10" cy="401.100" r="0.750" fill="#111"/>
<circle cx="14.300" cy="400.500" r="2.400" fill="#fff"/><circle cx="14.800" cy="401.100" r="0.850" fill="#111"/></g>

<!-- banner -->
<clipPath id="bclip"><rect x="2" y="414" width="160" height="26"/></clipPath>
<g clip-path="url(#bclip)">
<path d="M10 440C10 428 16 420 27 419C36 418.500 41 421 46 414H153.700L148 440Z" fill="#d4d4d4"/>
<circle cx="21.500" cy="432.300" r="7.100" fill="#eeeeee"/><rect x="14.400" y="432.300" width="14.200" height="8" fill="#eeeeee"/>
<circle cx="58.500" cy="426.500" r="12.200" fill="#eeeeee"/><circle cx="62" cy="427.500" r="5.300" fill="#d4d4d4"/>
<circle cx="92.100" cy="428.500" r="16.800" fill="#eeeeee"/><circle cx="95.300" cy="428.800" r="8.800" fill="#d4d4d4"/>
<rect x="2" y="440" width="160" height="6" fill="#eeeeee"/>
<rect x="2" y="408" width="160" height="6" fill="none"/>
</g>
<!-- row 1 -->
<g>
<ellipse cx="19" cy="465.500" rx="9" ry="1.600" fill="#000" opacity="0.100"/>
<rect x="10" y="451" width="17" height="13" fill="#fff"/>
<rect x="12" y="453" width="13" height="9" fill="url(#tbGray)"/>
<path d="M10 451.500h17M10 463.500h17" stroke="#000" stroke-width="1" stroke-dasharray="1 1" shape-rendering="crispEdges"/>
<path d="M10.500 451v13M26.500 451v13" stroke="#000" stroke-width="1" stroke-dasharray="1 1" shape-rendering="crispEdges"/>
<ellipse cx="49.500" cy="466" rx="9" ry="1.600" fill="#000" opacity="0.100"/>
<ellipse cx="49.500" cy="457.300" rx="8.800" ry="6.700" fill="url(#tbGray)" stroke="#fff" stroke-width="2.400"/>
<ellipse cx="49.500" cy="457.300" rx="8.900" ry="6.800" fill="none" stroke="#000" stroke-width="1.200" stroke-dasharray="1.100 1.150"/>
<!-- lasso -->
<ellipse cx="84" cy="464.500" rx="7" ry="1.500" fill="#000" opacity="0.080"/>
<g fill="none" stroke-linecap="round"><ellipse cx="82.500" cy="455.500" rx="8.500" ry="4.300" transform="rotate(-22 82.500 455.500)" stroke="#77776f" stroke-width="2.600"/><ellipse cx="82.500" cy="455.500" rx="8.500" ry="4.300" transform="rotate(-22 82.500 455.500)" stroke="#d9d9d2" stroke-width="1.100"/>
<path d="M75.500 459.500q0.500 2.500 2.500 3.500l-0.500 2.200" stroke="#77776f" stroke-width="2.600"/><path d="M75.500 459.500q0.500 2.500 2.500 3.500l-0.500 2.200" stroke="#d9d9d2" stroke-width="1"/><circle cx="76.300" cy="460.200" r="1.700" fill="#c9c9c2" stroke="#77776f" stroke-width="0.900"/></g>
<!-- wand -->
<ellipse cx="119" cy="465.500" rx="5" ry="1.200" fill="#000" opacity="0.100"/>
<path d="M113 457l9.500 8" stroke="#4a4c44" stroke-width="3" stroke-linecap="round"/><path d="M113 457l9.500 8" stroke="#a4a69c" stroke-width="1.400" stroke-linecap="round"/>
<circle cx="111.200" cy="454.800" r="4.800" fill="url(#tbGlow)"/>
<!-- color select -->
<rect x="149.500" y="448.500" width="6.500" height="6.500" fill="#729fcf" stroke="#204a87"/><rect x="151.300" y="450.300" width="3" height="3" fill="#3465a4"/>
<rect x="149.500" y="455" width="6.500" height="6" fill="#cc0000" stroke="#ef2929"/>
<rect x="149.500" y="461" width="6.500" height="6" fill="#73d216" stroke="#4e9a06"/>
<rect x="137.500" y="451.500" width="3.500" height="6" fill="#fff" stroke="#888a85"/>
<path d="M141.500 451.500h4.500l5 5.500-1.500 1.500-1.500-1-2.500 3-4-3.500z" fill="#fcaf3e" stroke="#f57900" stroke-width="0.900"/>
</g>
<!-- row 2 -->
<g>
<!-- scissors -->
<ellipse cx="18" cy="500" rx="8" ry="1.500" fill="#000" opacity="0.100"/>
<path d="M11.300 480c-1 4.500 1.200 9.500 5.200 13.500l2.200-1.500c-1.500-4.500-4-8.500-7.400-12z" fill="#f4f4f2" stroke="#888a85" stroke-width="0.900" stroke-linejoin="round"/>
<path d="M23.700 480c1 4.500-1.200 9.500-5.200 13.500l-2.200-1.500c1.500-4.500 4-8.500 7.400-12z" fill="#f4f4f2" stroke="#888a85" stroke-width="0.900" stroke-linejoin="round"/>
<ellipse cx="13.200" cy="496.700" rx="3" ry="2.500" fill="none" stroke="#2c5aa0" stroke-width="2.100"/><ellipse cx="22" cy="496.700" rx="3" ry="2.500" fill="none" stroke="#2c5aa0" stroke-width="2.100"/>
<path d="M14.300 494.300l3.300-2.300 3.300 2.300" fill="none" stroke="#2c5aa0" stroke-width="2"/>
<path d="M17.500 487.500v-5q0-2.900 3-2.900h8.500" fill="none" stroke="#f08a00" stroke-width="1" stroke-dasharray="1.500 0.800"/>
<!-- fg select -->
<rect x="48.500" y="489.500" width="11" height="9" rx="2.500" fill="#fff" stroke="#aaa"/><circle cx="54" cy="489.500" r="3.300" fill="#fff" stroke="#aaa"/><rect x="50" y="489.500" width="8" height="4" fill="#fff"/>
<rect x="41.500" y="488" width="11.500" height="6.500" fill="#3465a4" stroke="#5c3566" stroke-width="1" stroke-dasharray="1 1"/>
<path d="M45 488.500l2.300 4 2.300-4" fill="#fff" opacity="0.700"/>
<circle cx="47" cy="484.300" r="3.500" fill="#f5871f" stroke="#ce5c00" stroke-width="0.800"/><circle cx="46.300" cy="483.300" r="1.300" fill="#fcc98a"/>
<circle cx="47" cy="484.300" r="4.600" fill="none" stroke="#888" stroke-width="0.700" stroke-dasharray="0.800 1.200"/>
<!-- paths -->
<path d="M72.500 479.500h4.500v4l-1 1.500 1 1.500v4l-1 1.500 1 1.500v7h-4.500v-6l-1-1.500 1-1.500v-3l1-1.500-1-1.500z" fill="#fff" stroke="#77776f" stroke-width="0.900"/>
<path d="M76.500 484.500c2-4 7-4.500 9.500-0.500" fill="none" stroke="#888a85" stroke-width="2.200"/><path d="M76.500 484.500c2-4 7-4.500 9.500-0.500" fill="none" stroke="#fff" stroke-width="0.900"/>
<path d="M86.400 483.500c2 1.500 4.300 4.500 4.300 7 0 2-1.800 3.500-2.300 3.500h-4c-0.500 0-2.300-1.500-2.300-3.500 0-2.500 2.300-5.500 4.300-7z" fill="#f2de4c" stroke="#c4a000" stroke-width="0.900"/>
<path d="M86.400 485.500v5" stroke="#555" stroke-width="1"/><circle cx="86.400" cy="490.300" r="1" fill="#333"/>
<rect x="84" y="494.300" width="4.800" height="6.400" fill="#3465a4" stroke="#204a87" stroke-width="0.800"/><path d="M86.400 495v5" stroke="#9bb8de" stroke-width="0.800"/>
<!-- color picker -->
<ellipse cx="114" cy="497" rx="8" ry="2.500" fill="#000" opacity="0.070"/>
<path d="M116.500 485.500l-8.300 7" stroke="#555753" stroke-width="3.400" stroke-linecap="round"/><path d="M116.300 485.700l-8 6.800" stroke="#fff" stroke-width="1.800" stroke-linecap="round"/><path d="M113.500 488l-5 4.300" stroke="#3b74c4" stroke-width="1.800" stroke-linecap="round"/>
<path d="M114.500 482.700l4.800 5.200" stroke="#111" stroke-width="2.200" stroke-linecap="round"/>
<path d="M117.500 484l2.300-2.700" stroke="#111" stroke-width="4.400" stroke-linecap="round"/><path d="M117.800 483.600l1.800-2.100" stroke="#3465a4" stroke-width="1.800" stroke-linecap="round"/>
<path d="M106.400 494c1.500 1.800 2.500 2.800 2.500 4.200a2.500 2.500 0 0 1-5 0c0-1.400 1-2.400 2.500-4.200z" fill="#3b74c4" stroke="#204a87" stroke-width="0.700"/><circle cx="105.700" cy="498" r="0.800" fill="#a8c4e8"/>
<!-- zoom -->
<ellipse cx="146" cy="499.300" rx="8" ry="2" fill="#000" opacity="0.090"/>
<path d="M150.300 494l5.500 5.600" stroke="#444" stroke-width="3.600" stroke-linecap="round"/><path d="M151 494.500l5 5" stroke="#bbb" stroke-width="1.200" stroke-dasharray="1 1"/>
<circle cx="144.100" cy="487.900" r="8.300" fill="url(#tbGlass)" stroke="#fff" stroke-width="1.800"/><circle cx="144.100" cy="487.900" r="8.800" fill="none" stroke="#888a85" stroke-width="0.900"/>
</g>

<!-- row 3 -->
<g>
<!-- measure -->
<ellipse cx="18" cy="531" rx="7" ry="1.500" fill="#000" opacity="0.100"/>
<path d="M16.300 516.500c-3.500 3-4.500 8.500-4 14.500l1.800-4.500c0.500-3.500 1.500-6 4-8z" fill="#729fcf" stroke="#3465a4" stroke-width="0.900" stroke-linejoin="round"/>
<path d="M19.700 516.500c3.500 3 4.500 8.500 4 14.500l-1.800-4.500c-0.500-3.500-1.500-6-4-8z" fill="#729fcf" stroke="#3465a4" stroke-width="0.900" stroke-linejoin="round"/>
<path d="M9.800 524.300h16.800" stroke="#333" stroke-width="0.900"/>
<rect x="16" y="511.300" width="4" height="4" rx="0.800" fill="#5b8ccb" stroke="#3465a4" stroke-width="0.800"/>
<rect x="15.200" y="515" width="5.600" height="4.400" rx="1.200" fill="#babdb6" stroke="#555753" stroke-width="0.900"/><circle cx="18" cy="517.200" r="1" fill="#444"/>
<rect x="16.200" y="522" width="3.600" height="4.600" rx="1" fill="#d3d7cf" stroke="#555753" stroke-width="0.900"/>
<circle cx="23.800" cy="527.800" r="1.600" fill="#fff" stroke="#555753" stroke-width="0.900"/>
<!-- move -->
<ellipse cx="49.500" cy="530" rx="7" ry="2" fill="#000" opacity="0.120"/>
<path d="M49.500 512L52.700 515.400H50.700V520.300H55.600V518.300L59 521.500L55.600 524.700V522.700H50.700V527.600H52.700L49.500 531L46.300 527.600H48.300V522.700H43.400V524.700L40 521.500L43.400 518.300V520.300H48.300V515.400H46.300Z" fill="#6a97d2" stroke="#2c5aa0" stroke-width="1.200" stroke-linejoin="round"/>
<!-- align -->
<rect x="76.500" y="517.500" width="11" height="8.500" rx="1.200" fill="#f2f2f2" stroke="#999" stroke-width="1"/>
<g fill="#000"><path d="M81.400 511.800l2 2.300h-1.400v1.900h-1.200v-1.900h-1.400z"/><path d="M81.400 532.300l2-2.300h-1.400v-1.900h-1.200v1.900h-1.400z"/><path d="M71.300 521.500l2.300-2v1.400h1.900v1.200h-1.900v1.400z"/><path d="M92.600 521.500l-2.300-2v1.400h-1.900v1.200h1.900v1.400z"/></g>
<!-- crop -->
<ellipse cx="115" cy="530.300" rx="8" ry="1.300" fill="#000" opacity="0.080"/>
<path d="M104 530.800l8-11.200 5.200 6.600z" fill="#d3d7cf" stroke="#555753" stroke-width="0.800" stroke-linejoin="round"/>
<path d="M112 519.800l5.800-6.800 5.800 5.200-6.400 8z" fill="#f4f4f2" stroke="#555753" stroke-width="0.800" stroke-linejoin="round"/>
<path d="M115.500 520.500l3.300-3.800" stroke="#c4c6c0" stroke-width="1.800" stroke-linecap="round"/>
<!-- rotate -->
<ellipse cx="147" cy="530.500" rx="8" ry="1.500" fill="#000" opacity="0.120"/>
<rect x="138.500" y="514.200" width="10.500" height="7.300" fill="#4a78b5" stroke="#204a87" stroke-width="1.200"/>
<path d="M147.400 518.400l6.600 6.400-6.600 6.300-6.400-6.300z" fill="#4a7dbf" stroke="#3465a4" stroke-width="0.900"/>
<path d="M151 516.300l2.800-1.800 0.500 1.500c2 0.500 2.800 2 2.500 3.800l-2.300 2-2.300-2h1.500c0-1-0.500-1.500-1.300-1.500l0.500 1.200z" fill="#fff" stroke="#3465a4" stroke-width="0.900" stroke-linejoin="round"/>
<path d="M141.500 531l-2.800 1.200-0.500-1.500c-2-0.500-2.800-2-2.500-3.800l2.300-2 2.300 2h-1.500c0 1 0.500 1.500 1.300 1.500l-0.500-1.200z" fill="#fff" stroke="#3465a4" stroke-width="0.900" stroke-linejoin="round"/>
</g>
<!-- row 4 -->
<g>
<!-- scale -->
<ellipse cx="21" cy="563.500" rx="8" ry="1.300" fill="#000" opacity="0.120"/>
<rect x="12.600" y="548.300" width="16.200" height="14.200" fill="#5b8ccb" stroke="#204a87" stroke-width="1.200"/><rect x="14.300" y="550" width="12.800" height="10.800" fill="none" stroke="#8db0dd" stroke-width="0.800"/>
<rect x="7.700" y="544.600" width="6.800" height="6" fill="#7ea6d8" stroke="#204a87" stroke-width="1.200"/>
<path d="M15.500 545.500h4.500v7M10 552v6.500h5" fill="none" stroke="#fff" stroke-width="0.800" stroke-dasharray="0.800 0.900"/>
<path d="M11 547.500l9.500 9.500" stroke="#fff" stroke-width="1.300"/><path d="M22.500 559l-4.300-0.800 3.500-3.500z" fill="#fff"/>
<!-- shear -->
<ellipse cx="50" cy="563" rx="7" ry="1.300" fill="#000" opacity="0.100"/>
<rect x="43.500" y="546.700" width="11" height="11.600" fill="#4a78b5" stroke="#204a87" stroke-width="1.100"/>
<path d="M44.500 547.300h10.500l3.700 11.200h-10.800z" fill="#7ea6d8" fill-opacity="0.850" stroke="#3465a4" stroke-width="0.900"/>
<path d="M41.500 559.500h3.300v-1.800l3.600 3-3.600 3v-1.800h-3.300z" fill="#fff" stroke="#3465a4" stroke-width="0.900" stroke-linejoin="round"/>
<!-- perspective -->
<ellipse cx="82" cy="564" rx="9" ry="1.300" fill="#000" opacity="0.100"/>
<path d="M77.500 545.300h9.400l4.700 13h-19.400z" fill="#6f9ad3" stroke="#3465a4" stroke-width="1"/>
<rect x="77.500" y="546.300" width="9.400" height="10" fill="#4a78b5"/>
<rect x="73.400" y="559.600" width="4.600" height="4.200" fill="#3465a4"/><rect x="86" y="559.600" width="4.600" height="4.200" fill="#3465a4"/>
<path d="M77 560.500l-2.800 2.500M74.200 561v2h2M87 560.500l2.800 2.500M89.800 561v2h-2" stroke="#fff" stroke-width="0.800" fill="none"/>
<!-- flip -->
<ellipse cx="113" cy="563.500" rx="9" ry="1.300" fill="#000" opacity="0.120"/>
<path d="M113.800 545.100l9-1.900v20.300l-9-2z" fill="#9bbbe0" stroke="#204a87" stroke-width="1.100" stroke-linejoin="round"/>
<rect x="103.400" y="545.100" width="10.400" height="16.400" fill="#3f6fb0" stroke="#204a87" stroke-width="1.100"/>
<rect x="104.800" y="546.500" width="4.500" height="13.600" fill="#5482c2"/>
<path d="M106 553.500l3.300-3v2h8.200v-2l3.300 3-3.300 3v-2h-8.200v2z" fill="#fff" fill-opacity="0.900"/>
<!-- cage -->
<g stroke="#888a85" stroke-width="2.200"><path d="M139.300 546.400L153.500 549.300L152.500 561.500L145.400 554.500L138.300 559.300Z" fill="none"/></g>
<g stroke="#eeeeec" stroke-width="0.800"><path d="M139.300 546.400L153.500 549.300L152.500 561.500L145.400 554.500L138.300 559.300Z" fill="none"/></g>
<g fill="url(#tbBall)" stroke="#204a87" stroke-width="0.600"><circle cx="139.300" cy="546.400" r="3.200"/><circle cx="153.500" cy="549.300" r="3.200"/><circle cx="145.400" cy="554.500" r="3.200"/><circle cx="138.300" cy="559.300" r="3.200"/><circle cx="152.500" cy="561.500" r="3.200"/></g>
</g>

<!-- row 5 -->
<g>
<!-- text tool -->
<ellipse cx="18" cy="595" rx="9" ry="1.500" fill="#000" opacity="0.150"/>
<text x="7.200" y="594.800" font-family="DejaVu Sans, Liberation Sans, sans-serif" font-weight="bold" font-size="27" fill="#1a1a1a" textLength="22" lengthAdjust="spacingAndGlyphs">A</text>
<!-- bucket -->
<ellipse cx="51" cy="595" rx="8" ry="1.500" fill="#000" opacity="0.100"/>
<path d="M50 578.500c0-6 7-6 7 0v5" fill="none" stroke="#888a85" stroke-width="1.600"/><path d="M50 578.500c0-6 7-6 7 0v5" fill="none" stroke="#eeeeec" stroke-width="0.600"/>
<path d="M42 582.500h-2.200q-0.800 0-0.800 0.800v7.500q0 1 1 1t1-1v-6h2.500z" fill="#729fcf" stroke="#3465a4" stroke-width="0.800"/>
<path d="M42.300 584l10.300-5.600 7.100 10.800-9.900 6.100z" fill="#f0f0ee" stroke="#6a6c66" stroke-width="0.900" stroke-linejoin="round"/>
<path d="M44 584.500l8.300-4.500 2.500 3.800-9 6z" fill="#d9dbd6" opacity="0.800"/>
<circle cx="50.300" cy="585.500" r="1.900" fill="#aaa" stroke="#777" stroke-width="0.800"/>
<!-- blend -->
<ellipse cx="82" cy="595.500" rx="10" ry="1.500" fill="#000" opacity="0.120"/>
<rect x="73.800" y="577.500" width="16.800" height="16.800" fill="url(#tbBlend)" stroke="#555753" stroke-width="1.200"/>
<!-- pencil -->
<ellipse cx="113" cy="596" rx="7" ry="1.300" fill="#000" opacity="0.120"/>
<path d="M108 591.800l13.300-13" stroke="#8a5a10" stroke-width="5.600" stroke-linecap="round"/>
<path d="M108 591.800l13.300-13" stroke="#dba437" stroke-width="3.800" stroke-linecap="round"/>
<path d="M118.800 581.200l2.500-2.400" stroke="#ef2f3c" stroke-width="3.800" stroke-linecap="round"/><path d="M117.200 579.600l3.600 3.600" stroke="#c8c8c8" stroke-width="1"/>
<path d="M105.400 594.500l1.200-4.500 3.600 3.200z" fill="#f0dc9c" stroke="#8a5a10" stroke-width="0.800" stroke-linejoin="round"/><path d="M105.400 594.500l0.500-1.800 1.300 1.200z" fill="#333"/>
<!-- paintbrush -->
<ellipse cx="146" cy="596.500" rx="8" ry="1.300" fill="#000" opacity="0.120"/>
<path d="M154.300 575.800c-4 2.500-7 6.500-9 10.500l3.500 2c3-3.500 5-8 5.500-12.500z" fill="#d9771a" stroke="#9a5410" stroke-width="0.800" stroke-linejoin="round"/>
<path d="M145.300 586.300l3.500 2-3 4.500-3.500-2z" fill="#eeeeec" stroke="#888a85" stroke-width="0.800" stroke-linejoin="round"/>
<path d="M142.300 590.800l3.500 2c-1 3-5 3.500-10.500 3.800c3-2 5-3.500 7-5.800z" fill="#000"/><circle cx="141.800" cy="593" r="0.900" fill="#666"/>
</g>
<!-- row 6 -->
<g>
<!-- eraser -->
<ellipse cx="19" cy="625" rx="8" ry="1.500" fill="#000" opacity="0.080"/>
<path d="M12.500 611h13l-4 8.500h-13zM8.500 619.500v4.500h13l4-8.500v-4.500" fill="#f4a3a3" stroke="#ef2929" stroke-width="1.300" stroke-linejoin="round"/>
<path d="M8.500 619.500h13l4-8.500" fill="none" stroke="#ef2929" stroke-width="1"/><path d="M9.500 621.500h11.500l3.500-7.500" fill="none" stroke="#fff" stroke-width="0.800" opacity="0.700"/>
<!-- selected button -->
<rect x="34.500" y="602.500" width="31" height="31" rx="3" fill="#a9a9a9" stroke="#1e1e1e" stroke-width="1.200"/>
<!-- airbrush -->
<path d="M52.500 619c2 0 2.500 3.500 5 3.500s1.500-3.500 4-3.500" fill="none" stroke="#555" stroke-width="1.600"/><path d="M52.500 619c2 0 2.500 3.500 5 3.500s1.500-3.500 4-3.500" fill="none" stroke="#ddd" stroke-width="0.600"/>
<path d="M58.800 609.500l-7.500 7.300" stroke="#1a1a1a" stroke-width="3.600" stroke-linecap="round"/><path d="M58.300 609l-6.500 6.400" stroke="#777" stroke-width="0.800" stroke-dasharray="0.700 0.700"/>
<path d="M51 617l-5.300 5" stroke="#555" stroke-width="3" stroke-linecap="round"/><path d="M51 617l-5.300 5" stroke="#f4f4f4" stroke-width="1.700" stroke-linecap="round"/>
<path d="M48.500 614.500l2 1.800" stroke="#555" stroke-width="1.500"/>
<path d="M43.800 623.500l-4.300 4.500 1 0.800 4.500-4z" fill="#5b86c4" opacity="0.900"/>
<!-- ink -->
<ellipse cx="80" cy="625.500" rx="8" ry="1.300" fill="#000" opacity="0.120"/>
<rect x="72.900" y="615" width="13" height="9.800" rx="2.200" fill="#c8d4e6" stroke="#555753" stroke-width="1"/>
<rect x="74.300" y="617.800" width="10.200" height="6" rx="1" fill="#204a87"/><rect x="75" y="618.300" width="2" height="5" fill="#5b86c4"/>
<rect x="74.800" y="609.300" width="9.400" height="5.700" rx="2" fill="#4b4d4a" stroke="#2e3436" stroke-width="0.800"/><ellipse cx="79.500" cy="610.500" rx="3.500" ry="1" fill="#777"/>
<g fill="#3465a4"><path d="M86 626.500l3-1.800 0.500-3 0.800 2.800 2.800-1.200-2 2.200 2 2-2.800-0.800-1.500 1.500-0.300-1.800z"/><circle cx="84" cy="627.300" r="0.700"/><circle cx="92.300" cy="620.300" r="0.500"/></g>
<!-- clone -->
<ellipse cx="113.500" cy="625.500" rx="9" ry="1.300" fill="#000" opacity="0.100"/>
<rect x="112.300" y="614.800" width="2.400" height="3.500" fill="#fff" stroke="#b5690a" stroke-width="0.900"/>
<circle cx="113.500" cy="612.300" r="3.200" fill="#fbfbf7" stroke="#b5690a" stroke-width="1.100"/><circle cx="113.500" cy="612.800" r="1.200" fill="#d8d4c0"/>
<path d="M106.300 624.300v-4.500q0-2.300 2.300-2.300h9.800q2.300 0 2.300 2.300v4.500z" fill="#f1ecd0" stroke="#b5690a" stroke-width="1.100" stroke-linejoin="round"/>
<path d="M107.500 621.500h12" stroke="#d5cfa8" stroke-width="2"/><path d="M111.300 621.300h4.400l-2.200 1.700z" fill="#111"/>
<!-- heal -->
<g stroke-linecap="round"><path d="M140 612.200l12 11.800M152 612.200l-12 11.800" stroke="#c4a000" stroke-width="6.600"/><path d="M140 612.200l12 11.800M152 612.200l-12 11.800" stroke="#ead400" stroke-width="5"/></g>
<rect x="143.600" y="615.300" width="4.800" height="5.600" transform="rotate(-45 146 618.100)" fill="#f2e45a" stroke="#c4a000" stroke-width="0.700"/>
</g>
<!-- row 7 -->
<g>
<!-- perspective clone -->
<path d="M9.500 645.400l17.500-0.800-1.300 15.600-17.500-4.300z" fill="#3f6fb0" stroke="#204a87" stroke-width="1" stroke-linejoin="round"/><path d="M11 646.800l14.500-0.700-1 12.300" fill="none" stroke="#7ea6d8" stroke-width="0.800"/>
<circle cx="14.500" cy="642.100" r="2.600" fill="#fbfbf7" stroke="#b5690a" stroke-width="1"/>
<rect x="13.600" y="644.300" width="1.800" height="2.500" fill="#fff" stroke="#b5690a" stroke-width="0.700"/>
<path d="M8.300 652.500v-3.700q0-2 2-2h8.300q2 0 2 2v3.700z" fill="#f1ecd0" stroke="#b5690a" stroke-width="1" stroke-linejoin="round"/><path d="M12.500 650.300h4l-2 1.400z" fill="#111"/>
<!-- blur -->
<ellipse cx="49.500" cy="658.500" rx="7" ry="1.500" fill="#000" opacity="0.120"/>
<path d="M49.500 642.300c2.500 4.500 6 6.500 6 10.300a6 6 0 0 1-12 0c0-3.800 3.500-5.800 6-10.300z" fill="#a9c4e4" stroke="#3465a4" stroke-width="1"/><path d="M46 653c0 2 1.500 3.500 3.500 3.800" fill="none" stroke="#e4eefa" stroke-width="1.200" stroke-linecap="round"/>
<!-- smudge -->
<ellipse cx="84" cy="657" rx="7" ry="1.500" fill="#000" opacity="0.100"/>
<path d="M89.500 643l-5-0.500-8 4.500-2 5 1 2.500-1.300 2.700 1.800 0.800 3.500-4 2.500 1.500 4-1 2.500-4z" fill="#f3d2c4" stroke="#b5690a" stroke-width="1" stroke-linejoin="round"/>
<path d="M76.500 648l3 3M78.500 646.500l3 3M81 645.500l2.500 3" stroke="#b5690a" stroke-width="0.600" fill="none"/>
<path d="M86 642.500l5-1.500 2 4-4 3z" fill="#f6e4dc" opacity="0.900"/>
<!-- dodge -->
<ellipse cx="113" cy="658.500" rx="7" ry="1.300" fill="#000" opacity="0.100"/>
<path d="M115 648l7.600-7.800" stroke="#2e3436" stroke-width="2" stroke-linecap="round"/>
<circle cx="112" cy="652.100" r="5.600" fill="#3b3e40" stroke="#2e3436" stroke-width="0.800"/><circle cx="111" cy="651" r="3" fill="#4c4f51"/>
</g>

<!-- fg/bg colors -->
<rect x="70.500" y="684.500" width="38" height="27" fill="#fff" stroke="#000" stroke-width="1"/>
<path d="M70.500 712V684.500H109" fill="none" stroke="#fff" stroke-width="1"/>
<rect x="55.500" y="670.500" width="36" height="26" fill="#000" stroke="#d8d8d8" stroke-width="1"/>
<path d="M55 697H92V670" fill="none" stroke="#fff" stroke-width="1"/>
<rect x="59.500" y="704.500" width="7" height="7" fill="#fff" stroke="#aaa" stroke-width="0.800"/>
<rect x="55.500" y="700.500" width="7" height="7" fill="#000" stroke="#ddd" stroke-width="0.600"/>
<g fill="#fff" stroke="#888" stroke-width="0.800" stroke-linejoin="round"><path d="M97.500 673.800l3.800-3.600v2.200h3q2.200 0 2.200 2.200v2.200h2.200l-3.600 4.400-3.600-4.400h2.200v-1.500h-2.400v2.200z"/></g>
<!-- tool options tab -->
<path d="M2.500 735V716.500q0-2 2-2H102.500q2 0 2 2V735" fill="#a9a9a9" stroke="#2a2a2a" stroke-width="1"/>
<rect x="8.500" y="722.500" width="15" height="13" fill="#f6f6f6" stroke="#999" stroke-width="1"/>
<g stroke="#555" stroke-width="1.200"><path d="M12.500 725v10M19.500 725v10"/></g><rect x="11" y="727" width="3" height="4" fill="#888"/><rect x="18" y="729" width="3" height="4" fill="#888"/>
<rect x="145.500" y="724.500" width="10" height="10" rx="2" fill="#f8f8f8" stroke="#8a8a8a"/><path d="M153 726.500v6l-5.500-3z" fill="#777"/>
</svg>
<div class="abs" style="left:31px;top:722px;font-size:11px;line-height:16px;white-space:nowrap;color:#111">Tool Options</div>

<!-- layers dialog (partially visible) -->
<div class="abs" style="left:1003px;top:391px;width:21px;height:344px;background:#eeeeee;border-left:1px solid #5a5a50;border-top:1px solid #3a3a3a"></div>
<div class="abs" style="left:1004px;top:392px;width:20px;height:22px;background:linear-gradient(#ffffff 0,#f4f4ef 5px,#e3e3da 12px,#e9e9e1 21px);border-bottom:1px solid #cfcfb4"></div>
<svg class="abs" style="left:1003px;top:391px" width="21" height="344" viewBox="1003 391 21 344">
<use href="#wilber" x="1003" y="0"/>
<!-- tab -->
<path d="M1005.500 441.500q0 2 2 2H1024V414.500H1007.500q-2 0-2 2z" fill="#a9a9a9" stroke="#2a2a2a"/>
<path d="M1014.500 422.500h9.500v6.800h-12.500zM1011.500 431h12.500v3.800h-13zM1011 436.200h13v2.400h-13z" fill="#f6f6f6"/>
<path d="M1014.500 422.500h9.500v3h-10.800z" fill="#dcdcdc"/>
<!-- opacity box -->
<rect x="1009.500" y="475.500" width="17" height="29" fill="#b7c6d6" stroke="#1a1a1a"/>
<!-- layer list -->
<rect x="1010.200" y="534.500" width="16" height="202" fill="#fff" stroke="#1a1a1a" stroke-width="1.400"/>
<rect x="1010.900" y="535.200" width="14" height="27" fill="#a3a19b"/>
<path d="M1018.500 549.500q3-4 6-3.500v7q-3 0.500-6-3.500z" fill="#f8f8f8"/><circle cx="1023.500" cy="548.500" r="1.800" fill="#3465a4"/>
</svg>
<div class="abs" style="left:1009px;top:453px;font-size:11px;line-height:16px;white-space:nowrap;width:15px;overflow:hidden">Mode</div>
<div class="abs" style="left:1011px;top:482px;font-size:11px;line-height:16px;white-space:nowrap;width:13px;overflow:hidden">Opacity</div>
<div class="abs" style="left:1009px;top:511px;font-size:11px;line-height:16px;white-space:nowrap;width:15px;overflow:hidden">Lock:</div>

<div id="taskbar">
<div class="tbtn" style="left:2px;width:74px"></div>
<div class="tbtn" style="left:80px;width:21px;background:#302f2c"></div>
<div class="tbtn" style="left:291px;width:82px"></div>
<div class="tbtn" style="left:377px;width:82px"></div>
<div class="tbtn" style="left:463px;width:82px;background:#353430"></div>
<div class="tbtn" style="left:549px;width:82px"></div>
<div class="tbtn" style="left:635px;width:82px"></div>
<span class="lbl" style="left:34px">Menu</span>
<span class="lbl" style="left:86.500px">1</span>
<span class="lbl" style="left:110.500px">2</span>
<span class="lbl" style="left:323.500px">Fatd...</span>
<span class="lbl" style="left:409.500px">~/Do...</span>
<span class="lbl" style="left:495.500px">[fatd...</span>
<span class="lbl" style="left:581.500px">Tool...</span>
<span class="lbl" style="left:667.500px">Laye...</span>
<span class="lbl" style="left:725.500px;font-size:8.800px;top:9px;color:#ddd">913M</span>
<span class="lbl" style="left:969px;color:#e4e4e4">5:54 AM</span>
<div class="abs" style="left:938px;top:0;width:20.400px;height:33px;background:linear-gradient(90deg,#0a7a0a,#1f8a1f 50%,#0a7a0a)"></div>
<div class="abs" style="left:757.500px;top:5px;width:11px;height:9px;background:#fff"></div>
<div class="abs" style="left:757.500px;top:13.400px;width:11px;height:13.600px;background:#0000ff"></div>
<svg class="abs" style="left:0;top:-1px" width="1024" height="34" viewBox="0 735 1024 34">
<defs>
<radialGradient id="tkGlobe" cx="0.35" cy="0.3" r="0.8"><stop offset="0" stop-color="#e8f0fa"/><stop offset="0.45" stop-color="#7aa7e0"/><stop offset="1" stop-color="#2456a8"/></radialGradient>
<radialGradient id="tkSm" cx="0.4" cy="0.35" r="0.75"><stop offset="0" stop-color="#5a6af0"/><stop offset="0.6" stop-color="#1a22c8"/><stop offset="1" stop-color="#0a0f70"/></radialGradient>
<radialGradient id="tkDl" cx="0.4" cy="0.3" r="0.8"><stop offset="0" stop-color="#fafafa"/><stop offset="0.7" stop-color="#c8c8c8"/><stop offset="1" stop-color="#8a8a8a"/></radialGradient>
<linearGradient id="tkDog" x1="0" y1="0" x2="1" y2="0"><stop offset="0" stop-color="#d08a30"/><stop offset="1" stop-color="#fdd42e"/></linearGradient>
</defs>
<!-- menu dog -->
<g transform="translate(-7.400 741.300) scale(0.0850)"><use href="#dogs"/></g>
<!-- globe -->
<circle cx="145" cy="751.500" r="9" fill="url(#tkGlobe)" stroke="#d8e4f4" stroke-width="0.600"/>
<path d="M139 747c2-1.500 4-2 5-1l-1 2.500-2.500 1-0.500 2.500-2-1.500zM146 751l3.500-1 2.500 2-1 4-3 2-1.500-3.500zM148 744.500l3 0.500 1.500 2-3-0.500z" fill="#f4f8fc" opacity="0.900"/>
<!-- terminal -->
<rect x="166.500" y="743.500" width="19" height="15.500" rx="1.800" fill="#9a9d96" stroke="#6a6c66" stroke-width="1"/><rect x="168.500" y="745.500" width="15" height="10.500" fill="#17361f"/><path d="M170.500 748l3 2-3 2M174.500 753h4" fill="none" stroke="#e8f8e8" stroke-width="1.200"/>
<!-- cabinet -->
<rect x="201.500" y="745.500" width="12" height="14.500" rx="1" fill="#c98a2a" stroke="#8a5a10" stroke-width="1"/><path d="M202 752.500h11" stroke="#8a5a10" stroke-width="1"/><rect x="205.500" y="748" width="4" height="1.600" fill="#f0c878"/><rect x="205.500" y="755" width="4" height="1.600" fill="#f0c878"/>
<!-- pinwheel -->
<g transform="translate(238 752.500)"><path d="M0 0l-2-8.500 5 1.500z" fill="#c8408a"/><path d="M0 0l8-3 0.500 5z" fill="#3a78d0"/><path d="M0 0l4.500 7.500-5.500 1z" fill="#e88a20"/><path d="M0 0l-8 3.500-0.500-5.500z" fill="#d03030"/><path d="M0 0l-6-6.500 4-2z" fill="#a050c0"/><path d="M0 0l7.500 2.500-3 5z" fill="#40a840"/></g>
<!-- download -->
<circle cx="271" cy="751" r="8.500" fill="url(#tkDl)" stroke="#707070" stroke-width="0.800"/><path d="M269 745.500h4v5h2.800l-4.800 5.500-4.800-5.500h2.800z" fill="#e8e8e8" stroke="#444" stroke-width="1" stroke-linejoin="round"/>
<!-- seamonkey -->
<circle cx="307.500" cy="751.500" r="10" fill="url(#tkSm)"/><path d="M298 760.500c5-2 8-5 10-9.500 1-3 2.500-6 5.500-6.500 1.500 0 2.500 1 3.500 1.500-2 0.500-2.500 1.500-3 3.500-1 5-5 9-11 11.500-2 0.500-4 0.500-5-0.500z" fill="#d8e8fa" stroke="#8ab0e8" stroke-width="0.500"/>
<!-- folder -->
<path d="M384.500 745h6l1.500 2h11.500v12.500h-19z" fill="#3a8ad8" stroke="#1a5aa8" stroke-width="1" stroke-linejoin="round"/><path d="M385.500 749h17" stroke="#8cc0f0" stroke-width="1"/><ellipse cx="394.500" cy="754" rx="5" ry="3.800" fill="#c8c8c0" stroke="#666" stroke-width="0.600"/><circle cx="390.500" cy="750.500" r="2" fill="#e8e0c0" stroke="#666" stroke-width="0.500"/>
<!-- small fatdog icon -->
<g id="tkfd"><path d="M477 749c-0.800-1 0-2.300 1.500-2 3-1 8.500-0.500 9.500 2.500 0.500 2 0 3.500-0.800 4.800l-0.300 3h-1.800l-0.300-1.800h-3.500l-0.300 1.800h-1.800l-0.300-2.800c-1.500-0.800-2.300-2-2.300-3.300z" fill="#e0a020" stroke="#a06a10" stroke-width="0.500"/><path d="M477.500 752.500h4" stroke="#8a4a08" stroke-width="0.700"/></g>
<!-- gimp icons -->
<g id="tkgimp"><path d="M559 749.500c1-2.500 2.500-3 3-1.500 2.500-1 5.500-1 7.500 0 0.800-1.500 2-2.500 3-2.500 0.500 3.500 0 6.500-1.500 8.500-2 2.500-5.500 3.500-9 2.500-2.500-0.800-4-2.500-4.500-4.500z" fill="#6c675c" stroke="#3a3834" stroke-width="0.600"/><ellipse cx="558.300" cy="751" rx="2" ry="2.300" fill="#111"/><circle cx="562.500" cy="749.800" r="1.800" fill="#fff"/><circle cx="567.300" cy="749.800" r="2.300" fill="#fff"/><circle cx="563" cy="750.200" r="0.700" fill="#111"/><circle cx="567.800" cy="750.300" r="0.800" fill="#111"/><path d="M566 753.500l7.500 6.500" stroke="#c88a3a" stroke-width="1.500" stroke-linecap="round"/><path d="M564 752.500l2.500 1.800" stroke="#ddd" stroke-width="1.600"/></g>
<use href="#tkgimp" x="86" y="0"/>
<!-- clipboard -->
<rect x="781" y="743.500" width="16.500" height="18" rx="1.500" fill="#d48a28" stroke="#9a5a10" stroke-width="1"/><rect x="783.500" y="746" width="11.500" height="13.500" fill="#f8f8f4" stroke="#bbb" stroke-width="0.500"/><rect x="786" y="741.800" width="6.500" height="3.200" rx="1" fill="#b0b0a8" stroke="#666" stroke-width="0.600"/><path d="M786 749h6.500v2.500h-6.500v5h6.500v-3h-3" fill="none" stroke="#666" stroke-width="1"/>
<!-- keyboard -->
<path d="M807 746.500h15.500l1.500 8.500q-2 2-9.500 2t-9.500-2z" fill="#f0f4fa" stroke="#b8c8e0" stroke-width="0.800"/><path d="M807 750h16M806.500 753h17" stroke="#c8d4e8" stroke-width="0.800"/>
<!-- podcast -->
<rect x="830.500" y="741" width="20.500" height="21" rx="3.500" fill="#1e1e1e" stroke="#111" stroke-width="0.600"/><circle cx="840.800" cy="750.800" r="7" fill="none" stroke="#f4f4f4" stroke-width="1.700"/><circle cx="840.800" cy="750.800" r="3.900" fill="none" stroke="#f4f4f4" stroke-width="1.500"/><path d="M838.300 753l-2.800 8.500h10.600l-2.800-8.500z" fill="#1e1e1e"/><circle cx="840.800" cy="750.800" r="1.600" fill="#f4f4f4"/><path d="M840.800 752v5.500" stroke="#f4f4f4" stroke-width="1.800"/>
<!-- network -->
<g><rect x="876.500" y="743" width="12" height="9" rx="0.800" fill="#2a80e8" stroke="#c8d8f0" stroke-width="1"/><rect x="880.500" y="753" width="4" height="1.800" fill="#c8c8c8"/><rect x="869.500" y="749.500" width="12.500" height="9.500" rx="0.800" fill="#3a90f0" stroke="#d8e4f4" stroke-width="1"/><path d="M875.800 759.500v3M872 763h7.500" stroke="#c8c8c8" stroke-width="1.600"/></g>
<!-- volume -->
<path d="M905 749.500h3l4-4v13l-4-4h-3z" fill="#c8c8c8" stroke="#e8e8e8" stroke-width="0.600"/><path d="M914.500 748.500q2 3 0 6.500M917 746.500q3.500 5 0 10.500M919.800 744.500q5 7 0 14.500" fill="none" stroke="#3a6ab0" stroke-width="1.200"/>
</svg>

</div>
</div>
</body>
</html>
